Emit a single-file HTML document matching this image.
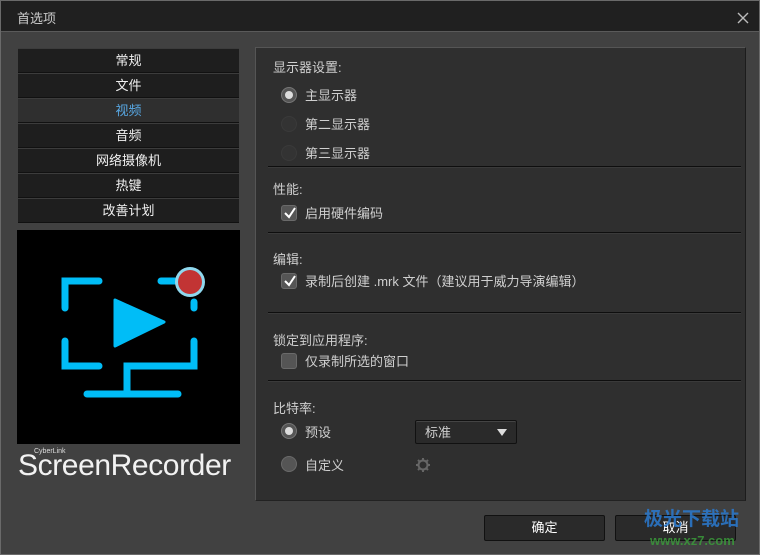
<!DOCTYPE html>
<html><head><meta charset="utf-8"><style>
*{margin:0;padding:0;box-sizing:border-box}
body{width:760px;height:555px;background:#414141;font-family:"Liberation Sans","Noto Sans CJK SC",sans-serif;font-size:13px;color:#d8d8d8;position:relative;overflow:hidden}
.abs{position:absolute}
#win{left:0;top:0;width:760px;height:555px;border:1px solid #6a6a6a}
#title{left:1px;top:1px;width:758px;height:31px;background:#202020;border-bottom:1px solid #5a5a5a}
.nav{left:18px;width:221px;height:25px;background:#1e1e1e;border-top:1px solid #3c3c3c;border-bottom:1px solid #111;color:#f0f0f0;text-align:center;line-height:23px;font-size:13px}
#panel{left:255px;top:47px;width:491px;height:454px;background:#2f2f2f;border:1px solid #555;border-right-color:#1c1c1c;border-bottom-color:#222}
.lbl{font-size:13px;color:#cfcfcf;line-height:17px}
.sep{left:268px;width:473px;height:2px;border-top:1px solid #0e0e0e;border-bottom:1px solid #3a3a3a}
.radio{width:16px;height:16px;border-radius:50%;background:#333;border:1px solid #3a3a3a}
.radio.on{background:#555;border:1px solid #777}
.radio.on:after{content:"";position:absolute;left:3px;top:3px;width:8px;height:8px;border-radius:50%;background:#ddd}
.radio.mid{background:#555;border:1px solid #6a6a6a}
.cb{width:16px;height:16px;border-radius:3px;background:#555;border:1px solid #6a6a6a}
.btn{height:26px;width:121px;background:#2a2a2a;border:1px solid #111;border-radius:2px;color:#fff;text-align:center;line-height:24px}
</style></head><body>
<div id="win" class="abs"></div>
<div id="title" class="abs"><span class="abs" style="left:16px;top:7px;color:#ccc;font-size:13px">首选项</span>
<svg class="abs" style="left:736px;top:11px" width="12" height="12"><path d="M1 1L11 11M11 1L1 11" stroke="#bbb" stroke-width="1.4"/></svg></div>

<div class="abs nav" style="top:48px">常规</div>
<div class="abs nav" style="top:73px">文件</div>
<div class="abs nav" style="top:98px;background:#2f2f2f;color:#58a8e4">视频</div>
<div class="abs nav" style="top:123px">音频</div>
<div class="abs nav" style="top:148px">网络摄像机</div>
<div class="abs nav" style="top:173px">热键</div>
<div class="abs nav" style="top:198px">改善计划</div>

<div class="abs" style="left:17px;top:230px;width:223px;height:214px;background:#000"></div>
<svg class="abs" style="left:0;top:0" width="260" height="420">
<g stroke="#00bdf7" stroke-width="7" stroke-linecap="round" fill="none">
<path d="M99 281H65V308"/><path d="M161 281H175"/><path d="M194 302V308"/>
<path d="M65 341V366H99"/><path d="M194 341V366H127V392"/><path d="M87 394H178"/>
</g>
<path d="M115 300L164 322L115 346Z" fill="#00bdf7" stroke="#00bdf7" stroke-width="3" stroke-linejoin="round"/>
<circle cx="190" cy="282" r="15" fill="#8fd8ee"/><circle cx="190" cy="282" r="12" fill="#c23434"/>
</svg>
<div class="abs" style="left:34px;top:448px;font-size:7px;color:#ddd">CyberLink</div>
<div class="abs" style="left:18px;top:449px;font-size:30px;color:#f2f2f2;letter-spacing:-0.4px;font-weight:300">ScreenRecorder</div>

<div id="panel" class="abs"></div>
<div class="abs lbl" style="left:273px;top:59px">显示器设置:</div>
<div class="abs radio on" style="left:281px;top:87px"></div><div class="abs lbl" style="left:305px;top:87px">主显示器</div>
<div class="abs radio" style="left:281px;top:116px"></div><div class="abs lbl" style="left:305px;top:116px">第二显示器</div>
<div class="abs radio" style="left:281px;top:145px"></div><div class="abs lbl" style="left:305px;top:145px">第三显示器</div>
<div class="abs sep" style="top:166px"></div>
<div class="abs lbl" style="left:273px;top:181px">性能:</div>
<div class="abs cb" style="left:281px;top:205px"></div><svg class="abs" style="left:283px;top:206px" width="14" height="14"><path d="M2 7L6 11L12 2" stroke="#fff" stroke-width="2" fill="none"/></svg>
<div class="abs lbl" style="left:305px;top:205px">启用硬件编码</div>
<div class="abs sep" style="top:232px"></div>
<div class="abs lbl" style="left:273px;top:251px">编辑:</div>
<div class="abs cb" style="left:281px;top:273px"></div><svg class="abs" style="left:283px;top:274px" width="14" height="14"><path d="M2 7L6 11L12 2" stroke="#fff" stroke-width="2" fill="none"/></svg>
<div class="abs lbl" style="left:305px;top:273px">录制后创建 .mrk 文件（建议用于威力导演编辑）</div>
<div class="abs sep" style="top:312px"></div>
<div class="abs lbl" style="left:273px;top:332px">锁定到应用程序:</div>
<div class="abs cb" style="left:281px;top:353px"></div>
<div class="abs lbl" style="left:305px;top:353px">仅录制所选的窗口</div>
<div class="abs sep" style="top:380px"></div>
<div class="abs lbl" style="left:273px;top:400px">比特率:</div>
<div class="abs radio on" style="left:281px;top:423px"></div><div class="abs lbl" style="left:305px;top:424px">预设</div>
<div class="abs" style="left:415px;top:420px;width:102px;height:24px;background:#2a2a2a;border:1px solid #111;border-radius:2px;box-shadow:inset 0 1px 0 #444"></div>
<div class="abs lbl" style="left:425px;top:424px">标准</div>
<svg class="abs" style="left:497px;top:429px" width="10" height="8"><path d="M0 0H10L5 7Z" fill="#ddd"/></svg>
<div class="abs radio mid" style="left:281px;top:456px"></div><div class="abs lbl" style="left:305px;top:457px">自定义</div>
<svg class="abs" style="left:415px;top:457px" width="16" height="16"><g stroke="#666" stroke-width="2"><circle cx="8" cy="8" r="4.5" fill="none"/><path d="M8 1V3.5M8 12.5V15M1 8H3.5M12.5 8H15M3 3L4.8 4.8M11.2 11.2L13 13M13 3L11.2 4.8M4.8 11.2L3 13"/></g></svg>

<div class="abs btn" style="left:484px;top:515px">确定</div>
<div class="abs btn" style="left:615px;top:515px">取消</div>
<div class="abs" style="left:644px;top:504px;font-size:19px;font-weight:bold;color:#2a7ad0;opacity:.85">极光下载站</div>
<div class="abs" style="left:650px;top:533px;font-size:13px;font-weight:bold;color:#3a9a3a;opacity:.85">www.xz7.com</div>
</body></html>
